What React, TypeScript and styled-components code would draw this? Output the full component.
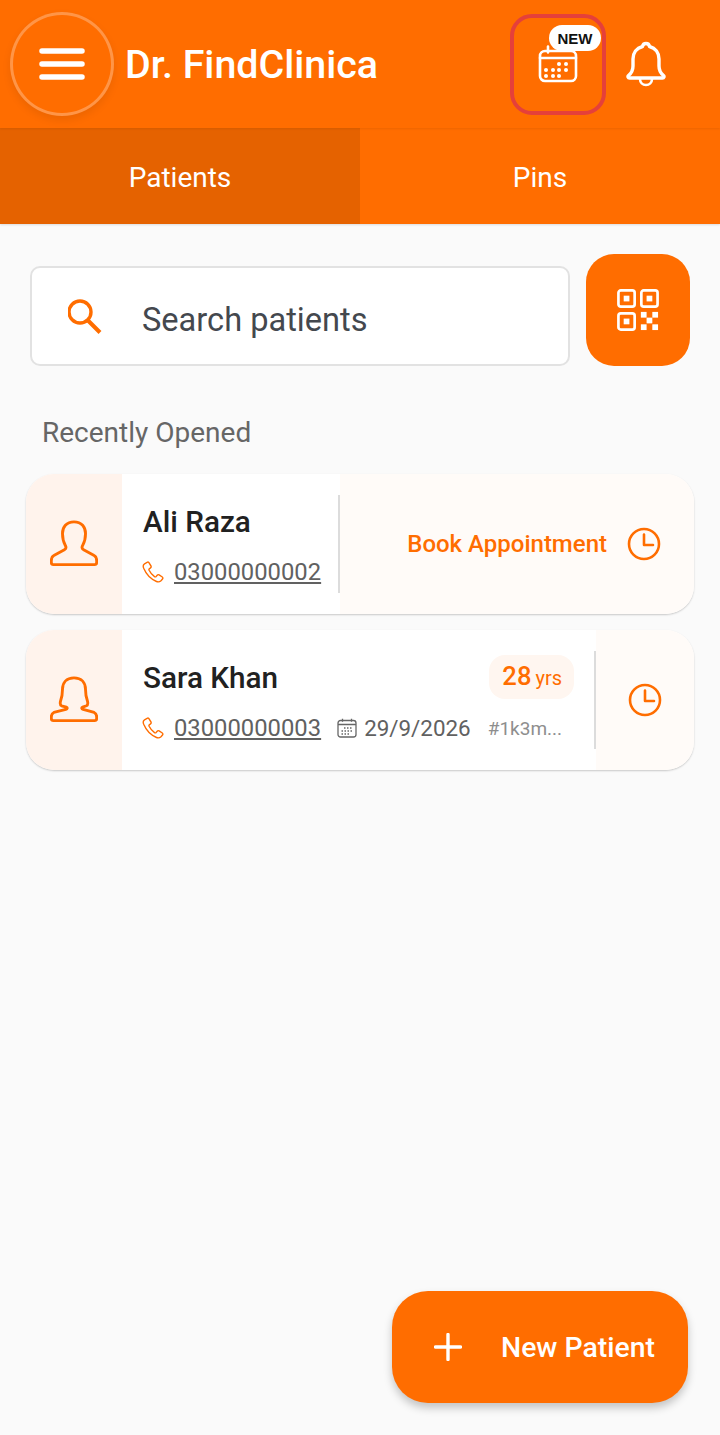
import { FC } from "react";
import styled, { createGlobalStyle } from "styled-components";

const ORANGE = "#ff6d00";

const GlobalStyle = createGlobalStyle`
  html, body {
    margin: 0;
    padding: 0;
    background: #fafafa;
  }
  * {
    box-sizing: border-box;
  }
  body {
    font-family: Roboto, "Liberation Sans", sans-serif;
  }
`;

const Page = styled.div`
  position: relative;
  width: 720px;
  height: 1435px;
  overflow: hidden;
  background: #fafafa;
`;

const Header = styled.header`
  position: relative;
  z-index: 1;
  display: flex;
  align-items: center;
  height: 128px;
  padding-left: 10px;
  background: ${ORANGE};
  box-shadow: 0 1px 2px rgba(0, 0, 0, 0.08);
`;

const MenuButton = styled.button`
  display: flex;
  align-items: center;
  justify-content: center;
  flex: none;
  width: 104px;
  height: 104px;
  padding: 0;
  border: 3.5px solid rgba(255, 255, 255, 0.28);
  border-radius: 50%;
  background: ${ORANGE};
  box-shadow: 0 4px 8px rgba(0, 0, 0, 0.08);
`;

const Title = styled.h1`
  flex: 1;
  margin: 2px 0 0 11px;
  color: #fff;
  font-size: 39.4px;
  font-weight: 500;
  line-height: 46px;
`;

const CalendarButton = styled.button`
  position: relative;
  display: flex;
  align-items: center;
  justify-content: center;
  flex: none;
  width: 96px;
  height: 101px;
  padding: 0;
  border: 4px solid #e5403a;
  border-radius: 22px;
  background: transparent;
`;

const NewBadge = styled.span`
  position: absolute;
  top: 7px;
  right: 1px;
  width: 52px;
  height: 26px;
  border-radius: 13px;
  background: #fff;
  color: #111;
  font-size: 15px;
  font-weight: 700;
  line-height: 27px;
  text-align: center;
`;

const BellButton = styled.button`
  display: flex;
  align-items: center;
  justify-content: center;
  flex: none;
  width: 44px;
  height: 44px;
  margin: 0 52px 0 18px;
  padding: 0;
  border: 0;
  background: transparent;
`;

const Tabs = styled.nav`
  display: flex;
  height: 96px;
  box-shadow: 0 1px 2px rgba(0, 0, 0, 0.12);
`;

const Tab = styled.div<{ $active?: boolean }>`
  display: flex;
  align-items: center;
  justify-content: center;
  flex: 1;
  padding-top: 2px;
  background: ${props => props.$active ? "#e56200" : ORANGE};
  color: #fff;
  font-size: 28px;
`;

const SearchRow = styled.div`
  display: flex;
  align-items: flex-end;
  gap: 16px;
  padding: 30px 30px 0;
`;

const SearchBox = styled.div`
  display: flex;
  align-items: center;
  flex: 1;
  height: 100px;
  padding: 2px 0 0 36px;
  border: 2px solid #e2e2e2;
  border-radius: 10px;
  background: #fff;
  color: #44484e;
  font-size: 32.6px;
`;

const SearchText = styled.span`
  margin-left: 38px;
  padding-top: 6px;
`;

const QrButton = styled.button`
  display: flex;
  align-items: center;
  justify-content: center;
  flex: none;
  width: 104px;
  height: 112px;
  padding: 0;
  border: 0;
  border-radius: 28px;
  background: ${ORANGE};
`;

const SectionTitle = styled.h2`
  margin: 50px 0 24px 42px;
  color: #666;
  font-size: 28px;
  font-weight: 400;
  line-height: 34px;
`;

const CardList = styled.div`
  display: flex;
  flex-direction: column;
  gap: 16px;
  padding: 0 26px;
`;

const Card = styled.article`
  display: flex;
  height: 140px;
  overflow: hidden;
  border-radius: 28px;
  background: #fff;
  box-shadow: 0 1px 2px rgba(0, 0, 0, 0.2);
`;

const Avatar = styled.div`
  display: flex;
  align-items: center;
  justify-content: center;
  flex: none;
  width: 96px;
  background: #fff3ec;
`;

const Info = styled.div<{ $grow?: boolean }>`
  display: flex;
  flex-direction: column;
  justify-content: center;
  gap: 17px;
  flex: ${props => props.$grow ? 1 : "none"};
  min-width: 0;
  padding: 3px 0 0 20px;
  width: ${props => props.$grow ? "auto" : "216px"};
`;

const NameRow = styled.div`
  display: flex;
  align-items: center;
  justify-content: space-between;
  height: 36px;
  padding-right: 20px;
`;

const Name = styled.div`
  padding-left: 1px;
  color: #212121;
  font-size: 29.7px;
  font-weight: 500;
  line-height: 36px;
`;

const AgeBadge = styled.div`
  display: flex;
  align-items: baseline;
  gap: 4px;
  height: 44px;
  margin-top: -3px;
  padding: 6px 12px 0 13px;
  border-radius: 16px;
  background: #fff6f0;
  color: ${ORANGE};
  font-size: 25.6px;
  font-weight: 500;
`;

const AgeUnit = styled.span`
  font-size: 20px;
  font-weight: 400;
`;

const MetaRow = styled.div`
  display: flex;
  align-items: center;
  height: 30px;
  white-space: nowrap;
`;

const PhoneNumber = styled.span`
  margin-left: 10px;
  color: #616161;
  font-size: 23.8px;
  text-decoration: underline;
  text-underline-offset: 2px;
`;

const DateText = styled.span`
  margin-left: 7px;
  color: #616161;
  font-size: 22.4px;
`;

const CalendarSlot = styled.span`
  display: flex;
  margin-left: 16px;
`;

const PatientId = styled.span`
  margin-left: 17px;
  color: #8e8e8e;
  font-size: 19px;
`;

const Divider = styled.div`
  flex: none;
  align-self: center;
  width: 2px;
  height: 98px;
  background: #dcdcdc;
`;

const BookAction = styled.div<{ $wide?: boolean }>`
  display: flex;
  align-items: center;
  justify-content: ${props => props.$wide ? "flex-end" : "center"};
  flex: ${props => props.$wide ? 1 : "none"};
  gap: 20px;
  width: ${props => props.$wide ? "auto" : "98px"};
  padding-right: ${props => props.$wide ? "33px" : "0"};
  background: #fffbf8;
  color: ${ORANGE};
  font-size: 24px;
  font-weight: 500;
`;

const Fab = styled.button`
  position: absolute;
  right: 32px;
  bottom: 32px;
  display: flex;
  align-items: center;
  width: 296px;
  height: 112px;
  padding: 0 0 0 42px;
  border: 0;
  border-radius: 36px;
  background: ${ORANGE};
  box-shadow: 0 5px 8px rgba(0, 0, 0, 0.22);
  color: #fff;
  font-family: inherit;
  font-size: 28.4px;
  font-weight: 500;
`;

const FabLabel = styled.span`
  margin-left: 39px;
`;

const MenuIcon: FC = () => (
  <svg width="46" height="32" viewBox="0 0 46 32" aria-label="menu">
    <path d="M3 3h40M3 16h40M3 29h40" stroke="#fff" strokeWidth="5.5" strokeLinecap="round" fill="none" />
  </svg>
);

const CalendarIcon: FC = () => (
  <svg width="40" height="38" viewBox="0 0 40 38" fill="none" aria-label="calendar">
    <rect x="2" y="6" width="36" height="30" rx="5" stroke="#fff" strokeWidth="2.6" />
    <path d="M2 13h36M10 1.5v6" stroke="#fff" strokeWidth="2.6" strokeLinecap="round" />
    <g fill="#fff">
      <circle cx="21" cy="19" r="2" /><circle cx="28" cy="19" r="2" />
      <circle cx="8" cy="25" r="2" /><circle cx="15" cy="25" r="2" /><circle cx="21" cy="25" r="2" /><circle cx="28" cy="25" r="2" />
      <circle cx="8" cy="31" r="2" /><circle cx="15" cy="31" r="2" /><circle cx="21" cy="31" r="2" />
    </g>
  </svg>
);

const BellIcon: FC = () => (
  <svg width="40" height="46" viewBox="0 0 40 46" fill="none" aria-label="notifications">
    <path
      d="M20 2.5c-2 0-3.2 1.3-3.5 3C10.500 7 7 12 7 18v7c0 4-2 7.500-4.500 9.500-1 .9-.5 2.500 1 2.500h33c1.500 0 2-1.600 1-2.500C35 32.500 33 29 33 25v-7c0-6-3.500-11-9.500-12.500-.3-1.700-1.500-3-3.500-3Z"
      stroke="#fff"
      strokeWidth="3.4"
      strokeLinejoin="round"
    />
    <path d="M14 38c0 3.500 2.700 6 6 6s6-2.500 6-6" stroke="#fff" strokeWidth="2.600" />
  </svg>
);

const SearchIcon: FC = () => (
  <svg width="36" height="36" viewBox="0 0 36 36" fill="none" aria-label="search">
    <circle cx="12" cy="13" r="11" stroke={ORANGE} strokeWidth="3.400" />
    <path d="M20 21.500l12 12" stroke={ORANGE} strokeWidth="4" />
  </svg>
);

const QrIcon: FC = () => (
  <svg width="42" height="42" viewBox="0 0 44 44" fill="none" aria-label="scan qr code">
    <g stroke="#fff" strokeWidth="2.800">
      <rect x="1.500" y="1.500" width="17" height="17" rx="2.500" />
      <rect x="25.500" y="1.500" width="17" height="17" rx="2.500" />
      <rect x="1.500" y="25.500" width="17" height="17" rx="2.500" />
    </g>
    <g fill="#fff">
      <rect x="7" y="7" width="6" height="6" />
      <rect x="31" y="7" width="6" height="6" />
      <rect x="7" y="31" width="6" height="6" />
      <rect x="25" y="24" width="6" height="6" />
      <rect x="37" y="24" width="6" height="6" />
      <rect x="31" y="30" width="6" height="6" />
      <rect x="25" y="37" width="6" height="6" />
      <rect x="37" y="37" width="6" height="6" />
    </g>
  </svg>
);

const MaleIcon: FC = () => (
  <svg width="48" height="48" viewBox="0 0 50 50" fill="none" aria-label="male patient">
    <path
      d="M25 2c-8 0-12 5.500-12 12 0 5 1 9 3 12.500.9 1.500 1 3.500-1 4.500L4 37c-3 1.500-3 4-2.500 8 .1 1 .9 1.500 2 1.500h43c1 0 1.900-.5 2-1.500.5-4 .5-6.500-2.500-8l-11-6c-2-1-1.900-3-1-4.500 2-3.500 3-7.500 3-12.500C37 7.500 33 2 25 2Z"
      stroke={ORANGE}
      strokeWidth="3"
      strokeLinejoin="round"
    />
  </svg>
);

const FemaleIcon: FC = () => (
  <svg width="48" height="48" viewBox="0 0 50 50" fill="none" aria-label="female patient">
    <path
      d="M25 2c-8 0-12 5-12 12 0 5-.5 8-2 12-.5 2-1 4 1 5l5 1.500c1.500.6 1 1.700-.5 2.200L4 38c-3 1.300-3 3.500-2.500 7 .1 1 .9 1.500 2 1.500h43c1 0 1.900-.5 2-1.500.5-3.500.5-5.700-2.500-7l-11.500-3.300c-1.500-.5-2-1.600-.5-2.200L38 31c2-1 1.500-3 1-5-1.500-4-2-7-2-12 0-7-4-12-12-12Z"
      stroke={ORANGE}
      strokeWidth="3"
      strokeLinejoin="round"
    />
  </svg>
);

const PhoneIcon: FC = () => (
  <svg width="22" height="22" viewBox="0 0 22 22" fill="none" aria-label="phone">
    <path
      d="M5.500 1.200 2.500 2.800C1 3.700 1 5.500 1.700 7.300 4 12.800 8.500 18 14.500 20.500c1.700.7 3.200.4 4.500-.8l1.500-1.600c.6-.7.5-1.600-.2-2.100l-3.200-2.100c-.7-.4-1.400-.3-1.900.3l-1 1.200c-.5.500-1.100.6-1.700.2-2.300-1.600-4.200-3.800-5.400-6.300-.3-.7-.2-1.200.4-1.600l1-.8c.6-.5.8-1.200.5-1.900L6.900 1.700C6.600 1.100 6 .9 5.500 1.200Z"
      stroke={ORANGE}
      strokeWidth="1.400"
      strokeLinejoin="round"
    />
  </svg>
);

const SmallCalendarIcon: FC = () => (
  <svg width="20" height="20" viewBox="0 0 20 20" fill="none" aria-label="date">
    <rect x="1" y="2.500" width="18" height="16.500" rx="2.500" stroke="#666" strokeWidth="1.300" />
    <path d="M1 6.500h18M5.500 .8v3M14.500 .8v3" stroke="#666" strokeWidth="1.300" />
    <path d="M7 10h1.500M10 10h1.500M13 10h1.500M4.500 13h1.500M7.500 13h1.500M10.500 13h1.500M13.500 13h1.500M4.500 16h1.500M7.500 16h1.500M10.500 16h1.500" stroke="#666" strokeWidth="1.400" />
  </svg>
);

const ClockIcon: FC = () => (
  <svg width="34" height="34" viewBox="0 0 34 34" fill="none" aria-label="book appointment">
    <circle cx="17" cy="17" r="15" stroke={ORANGE} strokeWidth="2.600" />
    <path d="M17 7.500V18h9" stroke={ORANGE} strokeWidth="2.600" strokeLinecap="round" strokeLinejoin="round" />
  </svg>
);

const PlusIcon: FC = () => (
  <svg width="28" height="28" viewBox="0 0 28 28" aria-label="add">
    <path d="M14 1.500v25M1.500 14h25" stroke="#fff" strokeWidth="3.400" strokeLinecap="round" fill="none" />
  </svg>
);

const App: FC = () => {
  return (
    <Page>
      <GlobalStyle />
      <Header>
        <MenuButton><MenuIcon /></MenuButton>
        <Title>Dr. FindClinica</Title>
        <CalendarButton>
          <CalendarIcon />
          <NewBadge>NEW</NewBadge>
        </CalendarButton>
        <BellButton><BellIcon /></BellButton>
      </Header>
      <Tabs>
        <Tab $active>Patients</Tab>
        <Tab>Pins</Tab>
      </Tabs>
      <SearchRow>
        <SearchBox>
          <SearchIcon />
          <SearchText>Search patients</SearchText>
        </SearchBox>
        <QrButton><QrIcon /></QrButton>
      </SearchRow>
      <SectionTitle>Recently Opened</SectionTitle>
      <CardList>
        <Card>
          <Avatar><MaleIcon /></Avatar>
          <Info>
            <Name>Ali Raza</Name>
            <MetaRow>
              <PhoneIcon />
              <PhoneNumber>03000000002</PhoneNumber>
            </MetaRow>
          </Info>
          <Divider />
          <BookAction $wide>
            Book Appointment
            <ClockIcon />
          </BookAction>
        </Card>
        <Card>
          <Avatar><FemaleIcon /></Avatar>
          <Info $grow>
            <NameRow>
              <Name>Sara Khan</Name>
              <AgeBadge>28<AgeUnit>yrs</AgeUnit></AgeBadge>
            </NameRow>
            <MetaRow>
              <PhoneIcon />
              <PhoneNumber>03000000003</PhoneNumber>
              <CalendarSlot><SmallCalendarIcon /></CalendarSlot>
              <DateText>29/9/2026</DateText>
              <PatientId>#1k3m...</PatientId>
            </MetaRow>
          </Info>
          <Divider />
          <BookAction>
            <ClockIcon />
          </BookAction>
        </Card>
      </CardList>
      <Fab>
        <PlusIcon />
        <FabLabel>New Patient</FabLabel>
      </Fab>
    </Page>
  );
};

export default App;
